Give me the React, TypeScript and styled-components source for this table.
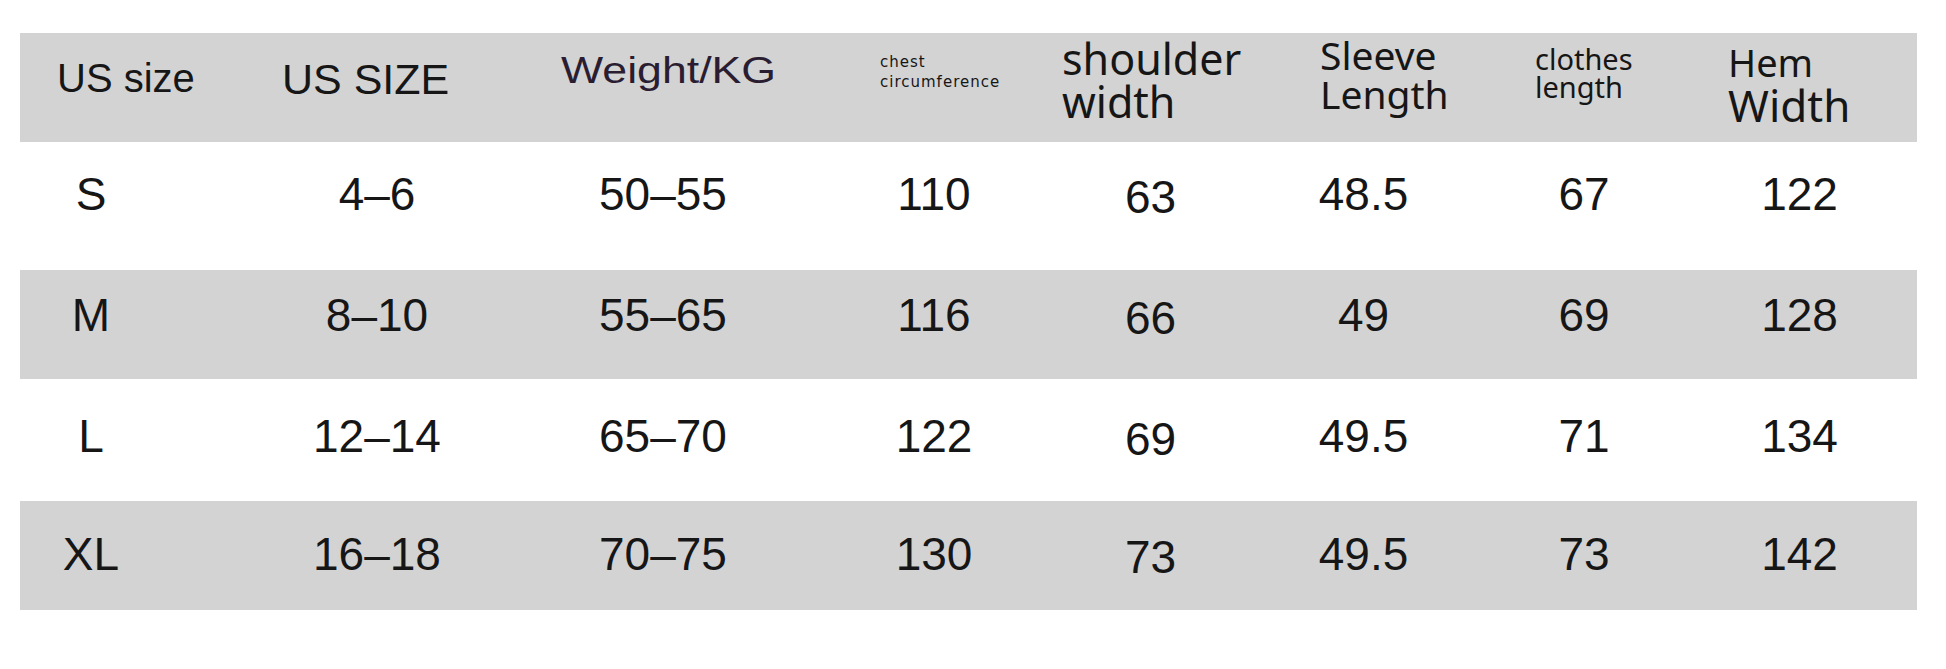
import React from "react";
import styled, { createGlobalStyle } from "styled-components";

const GlobalStyle = createGlobalStyle`
  html, body {
    margin: 0;
    padding: 0;
    background: #fff;
  }
  body {
    font-family: "Liberation Sans", Arial, sans-serif;
    color: #161616;
  }
`;

// column tracks shared by the header band and every size row
const TRACKS = "214px 286px 278px 244px 215px 217px 218px 225px";

type Column = {
  key: string;
  shift: number; // data centre offset from track centre
  drop?: number;
};

const columns: Column[] = [
  { key: "us", shift: -36 },
  { key: "usUpper", shift: 0 },
  { key: "weight", shift: 4 },
  { key: "chest", shift: 14 },
  { key: "shoulder", shift: 1, drop: 3 },
  { key: "sleeve", shift: -2 },
  { key: "length", shift: 1 },
  { key: "hem", shift: -5 },
];

const sizes = [
  { height: 128, top: 29, values: ["S", "4–6", "50–55", "110", "63", "48.5", "67", "122"] },
  { height: 109, top: 22, values: ["M", "8–10", "55–65", "116", "66", "49", "69", "128"] },
  { height: 122, top: 34, values: ["L", "12–14", "65–70", "122", "69", "49.5", "71", "134"] },
  { height: 109, top: 30, values: ["XL", "16–18", "70–75", "130", "73", "49.5", "73", "142"] },
];

export default function App() {
  return (
    <>
      <GlobalStyle />
      <Page>
        <Chart>
          <Row $shaded $height={109}>
            <HeadCell $left={37} $top={25}>
              <PlainHead $size={40}>US size</PlainHead>
            </HeadCell>
            <HeadCell $left={48} $top={25}>
              <PlainHead $size={43}>US SIZE</PlainHead>
            </HeadCell>
            <HeadCell $left={41} $top={20}>
              <WeightHead>Weight/KG</WeightHead>
            </HeadCell>
            <HeadCell $left={82} $top={19}>
              <TinyHead>
                chest
                <br />
                circumference
              </TinyHead>
            </HeadCell>
            <HeadCell $left={20} $top={4}>
              <StackHead $size={43} $lh={43}>
                shoulder
                <br />
                width
              </StackHead>
            </HeadCell>
            <HeadCell $left={63} $top={2}>
              <StackHead $size={39} $lh={39}>
                Sleeve
                <br />
                Length
              </StackHead>
            </HeadCell>
            <HeadCell $left={61} $top={12}>
              <StackHead $size={29} $lh={28}>
                clothes
                <br />
                length
              </StackHead>
            </HeadCell>
            <HeadCell $left={36} $top={9}>
              <StackLine $size={38} $lh={40}>
                Hem
              </StackLine>
              <StackLine $size={44} $lh={47}>
                Width
              </StackLine>
            </HeadCell>
          </Row>
          {sizes.map((size, i) => (
            <Row key={size.values[0]} $shaded={i % 2 === 1} $height={size.height}>
              {size.values.map((value, c) => (
                <Cell
                  key={columns[c].key}
                  $shift={columns[c].shift}
                  $top={size.top + (columns[c].drop ?? 0)}
                >
                  {value}
                </Cell>
              ))}
            </Row>
          ))}
        </Chart>
      </Page>
    </>
  );
}

const Page = styled.div`
  width: 1946px;
  height: 669px;
  padding: 33px 0 0 20px;
  box-sizing: border-box;
  background: #fff;
  overflow: hidden;
`;

const Chart = styled.div`
  width: 1897px;
  display: flex;
  flex-direction: column;
`;

const Row = styled.div<{ $shaded: boolean; $height: number }>`
  display: grid;
  grid-template-columns: ${TRACKS};
  height: ${(p) => p.$height}px;
  background: ${(p) => (p.$shaded ? "#d3d3d3" : "#fff")};
`;

const HeadCell = styled.div<{ $left: number; $top: number }>`
  padding: ${(p) => p.$top}px 0 0 ${(p) => p.$left}px;
  white-space: nowrap;
  color: #161616;
`;

const PlainHead = styled.div<{ $size: number }>`
  font-family: "Liberation Sans", Arial, sans-serif;
  font-size: ${(p) => p.$size}px;
  line-height: 1;
`;

const WeightHead = styled.div`
  display: inline-block;
  font-family: "Liberation Sans", Arial, sans-serif;
  font-size: 36px;
  line-height: 1;
  color: #2b1d31;
  transform: scaleX(1.24);
  transform-origin: left center;
`;

const TinyHead = styled.div`
  font-family: "DejaVu Sans", sans-serif;
  font-size: 15px;
  line-height: 20px;
  letter-spacing: 1px;
`;

const StackHead = styled.div<{ $size: number; $lh: number }>`
  font-family: "Noto Sans", "DejaVu Sans", sans-serif;
  font-size: ${(p) => p.$size}px;
  line-height: ${(p) => p.$lh}px;
`;

const StackLine = styled.span<{ $size: number; $lh: number }>`
  display: block;
  font-family: "Noto Sans", "DejaVu Sans", sans-serif;
  font-size: ${(p) => p.$size}px;
  line-height: ${(p) => p.$lh}px;
`;

const Cell = styled.div<{ $shift: number; $top: number }>`
  box-sizing: border-box;
  text-align: center;
  font-family: "Liberation Sans", Arial, sans-serif;
  font-size: 46px;
  line-height: 1;
  white-space: nowrap;
  padding-top: ${(p) => p.$top}px;
  padding-left: ${(p) => Math.max(0, p.$shift * 2)}px;
  padding-right: ${(p) => Math.max(0, -p.$shift * 2)}px;
`;
